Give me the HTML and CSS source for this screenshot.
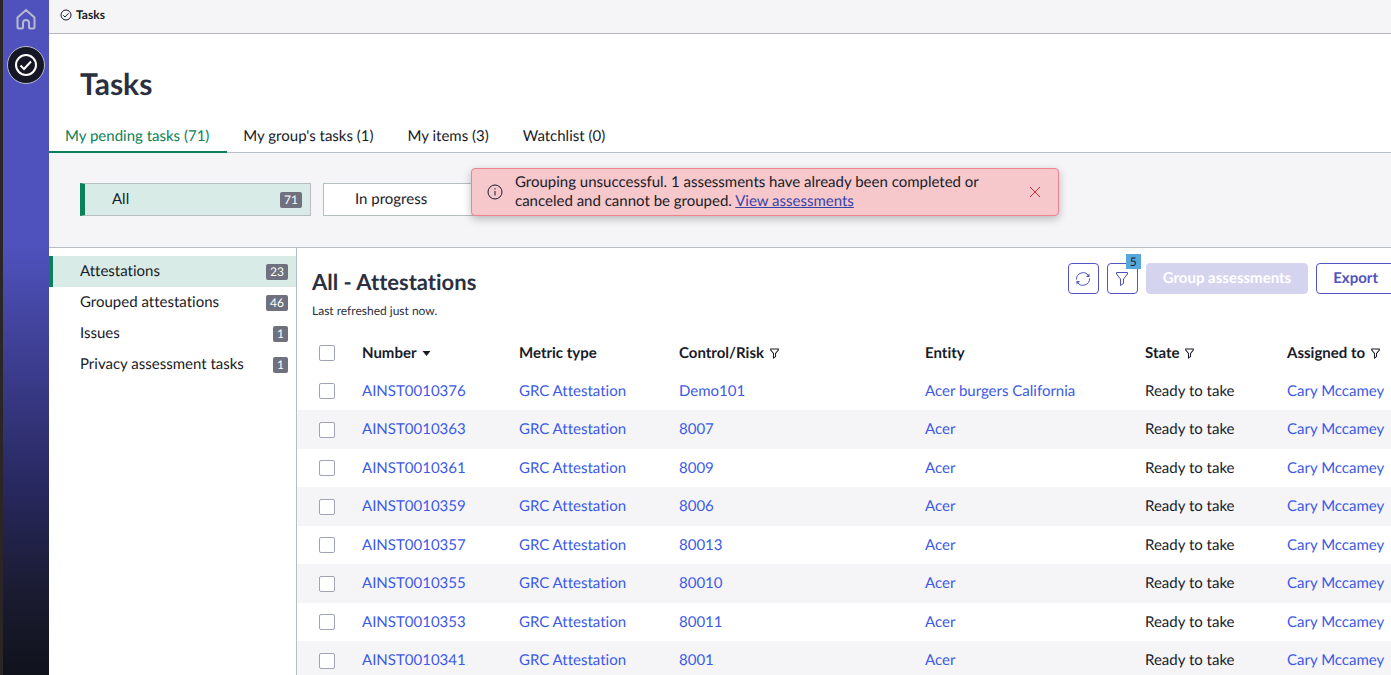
FILE: index.html
```html
<!DOCTYPE html>
<html lang="en">
<head>
    <meta charset="UTF-8">
    <meta name="viewport" content="width=device-width, initial-scale=1.0">
    <title>Tasks</title>
    <link rel="stylesheet" href="styles.css">
</head>
<body>
    <svg class="symbols" aria-hidden="true">
        <symbol id="funnel" viewBox="0 0 16 16">
            <path d="M2.500 1.500h11v1.500L9.500 8v4.500L6.500 14.500V8L2.500 3z"/>
        </symbol>
        <symbol id="check-circle" viewBox="0 0 24 24">
            <circle cx="12" cy="12" r="10"/>
            <path d="M6.500 12.500l3.500 3.500L17 8.500"/>
        </symbol>
    </svg>

    <nav class="rail" aria-label="Main">
        <a class="rail-link" href="#" aria-label="Home">
            <svg viewBox="0 0 24 24"><path d="M3.500 10.500L12 3l8.500 7.500V20a1.500 1.500 0 0 1-1.500 1.500H16.500A1.500 1.500 0 0 1 15 20v-4a3 3 0 0 0-6 0v4a1.500 1.500 0 0 1-1.500 1.500H5A1.500 1.500 0 0 1 3.500 20z"/></svg>
        </a>
        <a class="rail-link active" href="#" aria-label="Tasks">
            <svg><use href="#check-circle"/></svg>
        </a>
    </nav>

    <div class="page">
        <div class="breadcrumb">
            <svg><use href="#check-circle"/></svg>
            <span>Tasks</span>
        </div>

        <h1>Tasks</h1>

        <div class="tabs">
            <button class="tab active">My pending tasks (71)</button>
            <button class="tab">My group's tasks (1)</button>
            <button class="tab">My items (3)</button>
            <button class="tab">Watchlist (0)</button>
        </div>

        <div class="filters">
            <button class="filter active"><span>All</span><span class="count">71</span></button>
            <button class="filter"><span>In progress</span></button>

            <div class="alert" role="alert">
                <svg class="alert-icon" viewBox="0 0 16 16"><circle cx="8" cy="8" r="7"/><path d="M8 7v4.500M8 4.200v1.300"/></svg>
                <p>Grouping unsuccessful. 1 assessments have already been completed or canceled and cannot be grouped. <a href="#">View assessments</a></p>
                <button class="alert-close" aria-label="Close">
                    <svg viewBox="0 0 12 12"><path d="M1 1l10 10M11 1L1 11"/></svg>
                </button>
            </div>
        </div>

        <div class="content">
            <aside class="sidebar">
                <button class="side-item active"><span>Attestations</span><span class="count">23</span></button>
                <button class="side-item"><span>Grouped attestations</span><span class="count">46</span></button>
                <button class="side-item"><span>Issues</span><span class="count">1</span></button>
                <button class="side-item"><span>Privacy assessment tasks</span><span class="count">1</span></button>
            </aside>

            <main class="list">
                <div class="list-header">
                    <div>
                        <h2>All - Attestations</h2>
                        <p class="refreshed">Last refreshed just now.</p>
                    </div>
                    <div class="actions">
                        <button class="icon-btn" aria-label="Refresh">
                            <svg viewBox="0 0 16 16">
                                <path d="M1.500 8.500A6.500 6.500 0 0 1 13.500 4.800M14.500 7.500A6.500 6.500 0 0 1 2.500 11.200"/>
                                <path class="solid" d="M14.500 2.500v3.500h-3.500zM1.500 13.500V10h3.500z"/>
                            </svg>
                        </button>
                        <button class="icon-btn" aria-label="Filter">
                            <svg><use href="#funnel"/></svg>
                            <span class="badge">5</span>
                        </button>
                        <button class="btn primary" disabled>Group assessments</button>
                        <button class="btn">Export</button>
                    </div>
                </div>

                <table>
                    <thead>
                        <tr>
                            <th class="col-check"><input type="checkbox" aria-label="Select all"></th>
                            <th class="col-number">Number <svg class="sort" viewBox="0 0 8 5"><path d="M0 0h8L4 5z"/></svg></th>
                            <th class="col-metric">Metric type</th>
                            <th class="col-control">Control/Risk <svg class="funnel"><use href="#funnel"/></svg></th>
                            <th class="col-entity">Entity</th>
                            <th class="col-state">State <svg class="funnel"><use href="#funnel"/></svg></th>
                            <th class="col-assigned">Assigned to <svg class="funnel"><use href="#funnel"/></svg></th>
                        </tr>
                    </thead>
                    <tbody>
                        <tr>
                            <td><input type="checkbox" aria-label="Select AINST0010376"></td>
                            <td><a href="#">AINST0010376</a></td>
                            <td><a href="#">GRC Attestation</a></td>
                            <td><a href="#">Demo101</a></td>
                            <td><a href="#">Acer burgers California</a></td>
                            <td>Ready to take</td>
                            <td><a href="#">Cary Mccamey</a></td>
                        </tr>
                        <tr>
                            <td><input type="checkbox" aria-label="Select AINST0010363"></td>
                            <td><a href="#">AINST0010363</a></td>
                            <td><a href="#">GRC Attestation</a></td>
                            <td><a href="#">8007</a></td>
                            <td><a href="#">Acer</a></td>
                            <td>Ready to take</td>
                            <td><a href="#">Cary Mccamey</a></td>
                        </tr>
                        <tr>
                            <td><input type="checkbox" aria-label="Select AINST0010361"></td>
                            <td><a href="#">AINST0010361</a></td>
                            <td><a href="#">GRC Attestation</a></td>
                            <td><a href="#">8009</a></td>
                            <td><a href="#">Acer</a></td>
                            <td>Ready to take</td>
                            <td><a href="#">Cary Mccamey</a></td>
                        </tr>
                        <tr>
                            <td><input type="checkbox" aria-label="Select AINST0010359"></td>
                            <td><a href="#">AINST0010359</a></td>
                            <td><a href="#">GRC Attestation</a></td>
                            <td><a href="#">8006</a></td>
                            <td><a href="#">Acer</a></td>
                            <td>Ready to take</td>
                            <td><a href="#">Cary Mccamey</a></td>
                        </tr>
                        <tr>
                            <td><input type="checkbox" aria-label="Select AINST0010357"></td>
                            <td><a href="#">AINST0010357</a></td>
                            <td><a href="#">GRC Attestation</a></td>
                            <td><a href="#">80013</a></td>
                            <td><a href="#">Acer</a></td>
                            <td>Ready to take</td>
                            <td><a href="#">Cary Mccamey</a></td>
                        </tr>
                        <tr>
                            <td><input type="checkbox" aria-label="Select AINST0010355"></td>
                            <td><a href="#">AINST0010355</a></td>
                            <td><a href="#">GRC Attestation</a></td>
                            <td><a href="#">80010</a></td>
                            <td><a href="#">Acer</a></td>
                            <td>Ready to take</td>
                            <td><a href="#">Cary Mccamey</a></td>
                        </tr>
                        <tr>
                            <td><input type="checkbox" aria-label="Select AINST0010353"></td>
                            <td><a href="#">AINST0010353</a></td>
                            <td><a href="#">GRC Attestation</a></td>
                            <td><a href="#">80011</a></td>
                            <td><a href="#">Acer</a></td>
                            <td>Ready to take</td>
                            <td><a href="#">Cary Mccamey</a></td>
                        </tr>
                        <tr>
                            <td><input type="checkbox" aria-label="Select AINST0010341"></td>
                            <td><a href="#">AINST0010341</a></td>
                            <td><a href="#">GRC Attestation</a></td>
                            <td><a href="#">8001</a></td>
                            <td><a href="#">Acer</a></td>
                            <td>Ready to take</td>
                            <td><a href="#">Cary Mccamey</a></td>
                        </tr>
                    </tbody>
                </table>
            </main>
        </div>
    </div>
</body>
</html>
```
FILE: styles.css
```css
* {
    margin: 0;
    padding: 0;
    box-sizing: border-box;
}

body {
    display: flex;
    height: 100vh;
    overflow: hidden;
    background: #fff;
    color: #181b28;
    font-family: Lato, "Open Sans", sans-serif;
    font-size: 15px;
    font-variant-ligatures: none;
    line-height: 19px;
    text-rendering: geometricPrecision;
}

button {
    background: none;
    border: none;
    color: inherit;
    font: inherit;
    font-variant-ligatures: none;
    text-rendering: inherit;
    cursor: pointer;
}

svg {
    flex: none;
    fill: none;
    stroke: currentColor;
}

.symbols {
    position: absolute;
    width: 0;
    height: 0;
}

/* Left rail */
.rail {
    flex: none;
    display: flex;
    flex-direction: column;
    align-items: center;
    gap: 8px;
    width: 49px;
    border-left: 3px solid #292625;
    background: linear-gradient(#4f52bd 0%, #4f52bd 36%, #282860 72%, #1a1b30 88%, #10131c 100%);
}

.rail-link {
    display: flex;
    align-items: center;
    justify-content: center;
    width: 38px;
    height: 38px;
    border-radius: 50%;
    color: #b9b9cc;
}

.rail-link svg {
    width: 24px;
    height: 24px;
    stroke-width: 2;
}

.rail-link.active {
    background: #161724;
    border: 1px solid #b9b9c8;
    color: #fff;
}

/* Page header */
.page {
    flex: 1;
    min-width: 0;
    display: flex;
    flex-direction: column;
}

.breadcrumb {
    display: flex;
    align-items: center;
    gap: 4px;
    padding: 5px 11px 9px;
    border-bottom: 1px solid #b4b5bf;
    background: #f5f5f8;
    font-size: 12px;
    font-weight: 700;
}

.breadcrumb svg {
    width: 12px;
    height: 12px;
    stroke-width: 2;
}

h1 {
    padding: 30px 31px 23px;
    color: #2b3041;
    font-size: 30px;
    line-height: 40px;
}

h2 {
    color: #2b3041;
    font-size: 22px;
    line-height: 28px;
}

.tabs {
    display: flex;
    border-bottom: 1px solid #b9bfc9;
}

.tab {
    padding: 0 18px 5px 16px;
    border-bottom: 2px solid transparent;
    margin-bottom: -1px;
}

.tab.active {
    border-color: #0a8158;
    color: #0a8158;
}

/* Filter cards */
.filters {
    position: relative;
    display: flex;
    gap: 12px;
    padding: 30px 31px 31px;
    border-bottom: 1px solid #b8bec4;
    background: #f5f5f8;
}

.filter {
    display: flex;
    align-items: center;
    justify-content: space-between;
    width: 231px;
    height: 33px;
    padding: 0 8px 0 31px;
    border: 1px solid #b5bfbf;
    background: #fff;
}

.filter.active {
    padding-left: 27px;
    border-left: 5px solid #0a8158;
    background: #d9ebe6;
}

.count {
    padding: 0 4px;
    border-radius: 2px;
    background: #70717f;
    color: #fff;
    font-size: 12px;
    line-height: 16px;
}

/* Error message over the filters */
.alert {
    position: absolute;
    top: 15px;
    left: 422px;
    display: flex;
    align-items: center;
    width: 588px;
    padding: 4px 15px;
    border: 1px solid #ef8490;
    border-radius: 4px;
    background: #f6c7cb;
    box-shadow: 0 3px 8px rgba(0, 0, 0, 0.25);
}

.alert-icon {
    width: 16px;
    height: 16px;
}

.alert p {
    flex: 1;
    padding: 0 20px 0 12px;
}

.alert a {
    color: #3844a8;
}

.alert-close {
    display: flex;
    padding: 2px;
    color: #c8303d;
}

.alert-close svg {
    width: 12px;
    height: 12px;
}

/* Sidebar */
.content {
    flex: 1;
    min-height: 0;
    display: flex;
}

.sidebar {
    flex: none;
    width: 248px;
    padding-top: 8px;
    border-right: 1px solid #b5bfc3;
}

.side-item {
    display: flex;
    align-items: center;
    justify-content: space-between;
    width: 100%;
    height: 31px;
    padding: 0 8px 0 27px;
    border-left: 4px solid transparent;
}

.side-item.active {
    border-color: #0a8158;
    background: #d9ebe6;
}

/* Task list */
.list {
    flex: 1;
    min-width: 0;
    overflow: hidden;
}

.list-header {
    display: flex;
    justify-content: space-between;
    align-items: flex-start;
    margin-right: -4px;
    padding: 15px 0 14px 15px;
}

.list-header h2 {
    padding-top: 5px;
}

.refreshed {
    padding-top: 5px;
    color: #2b3041;
    font-size: 12px;
}

.actions {
    display: flex;
    gap: 8px;
}

.btn,
.icon-btn {
    display: flex;
    align-items: center;
    justify-content: center;
    height: 31px;
    border: 1px solid #5355c4;
    border-radius: 4px;
    color: #4f52bd;
}

.btn {
    padding: 0 16px;
    font-weight: 700;
}

.btn.primary {
    border-color: #d4d4ef;
    background: #d4d4ef;
    color: #fff;
}

.icon-btn {
    position: relative;
    width: 31px;
}

.icon-btn svg {
    width: 16px;
    height: 16px;
}

.solid {
    fill: currentColor;
    stroke: none;
}

.badge {
    position: absolute;
    top: -10px;
    right: -4px;
    width: 15px;
    background: #56a8dc;
    color: #181b28;
    font-size: 12px;
    line-height: 15px;
}

table {
    width: 100%;
    min-width: 1095px;
    border-collapse: collapse;
    table-layout: fixed;
}

th,
td {
    text-align: left;
    white-space: nowrap;
}

th:first-child,
td:first-child {
    padding-left: 22px;
}

thead tr,
tbody tr {
    height: 38px;
}

tbody tr:nth-child(even) {
    height: 39px;
    background: #f5f5f8;
}

td a {
    color: #3c59e7;
    text-decoration: none;
}

input[type="checkbox"] {
    appearance: none;
    display: block;
    width: 16px;
    height: 16px;
    border: 1px solid #a0a3b3;
    border-radius: 2px;
    background: #fff;
}

.sort {
    width: 9px;
    height: 5px;
    margin-left: 2px;
    fill: currentColor;
    stroke: none;
    vertical-align: middle;
}

.funnel {
    width: 11px;
    height: 11px;
    margin-left: 1px;
    stroke-width: 1.5;
    vertical-align: -1px;
}

.col-check {
    width: 65px;
}

.col-number {
    width: 157px;
}

.col-metric {
    width: 160px;
}

.col-control {
    width: 246px;
}

.col-entity {
    width: 220px;
}

.col-state {
    width: 142px;
}
```
